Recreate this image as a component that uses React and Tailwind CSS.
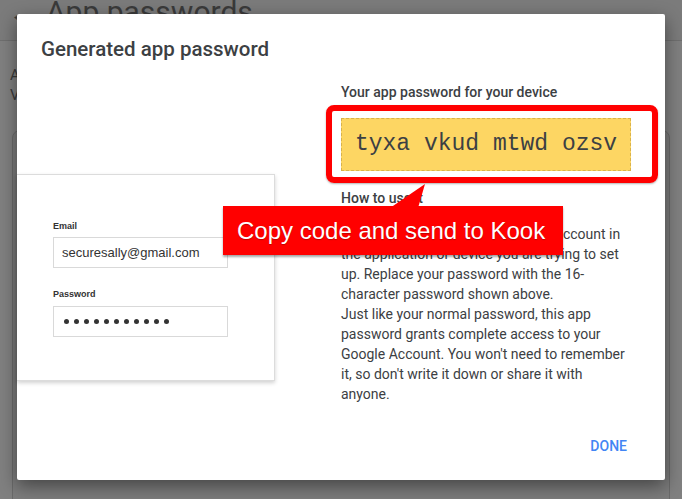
import React from "react"

const dots = Array.from({ length: 11 })

export default function App() {
  return (
    <div className="relative w-[682px] h-[499px] overflow-hidden bg-[#808080] font-['Roboto',sans-serif]">
      {/* page behind the modal */}
      <div className="h-[41px] bg-[#7b7b7b] border-b border-[#6f6f6f] flex items-start pl-[10px] gap-[14px] overflow-hidden">
        <span className="text-[22px] leading-[24px] text-[#3a3a3a] mt-[2px]">←</span>
        <span className="text-[30px] leading-[30px] text-[#3a3a3a] -mt-[3px]">App passwords</span>
      </div>
      <div className="pl-[10px] pt-[24px] text-[15px] leading-[20px] text-[#3a3a3a]">
        <p>App passwords let you sign in</p>
        <p>Verify it's you</p>
      </div>
      <div className="mx-[12px] mt-[25px] h-[400px] rounded-[8px] border border-[#6a6a6a] bg-[#7c7c7c]"></div>

      {/* dialog */}
      <div className="absolute left-[17px] top-[14px] w-[648px] h-[466px] bg-white rounded-[2px] shadow-[0_6px_18px_rgba(0,0,0,0.45)]">
        <h1 className="pl-[24px] pt-[21px] text-[20.5px] leading-[28px] font-medium text-[#3c4043]">Generated app password</h1>

        <div className="flex">
          <div className="w-[324px]">
            <div className="mt-[111px] w-[258px] h-[207px] bg-white border border-l-0 border-[#dcdcdc] shadow-[0_2px_4px_rgba(0,0,0,0.18)] pl-[36px] pt-[45px]">
              <p className="text-[9px] leading-[12px] font-bold text-[#333] font-['Liberation_Sans',sans-serif]">Email</p>
              <div className="mt-[5px] w-[175px] h-[31px] border border-[#d9d9d9] flex items-center pl-[8px] text-[13px] text-[#333] font-['Liberation_Sans',sans-serif]">securesally@gmail.com</div>
              <p className="mt-[20px] text-[9px] leading-[12px] font-bold text-[#333] font-['Liberation_Sans',sans-serif]">Password</p>
              <div className="mt-[6px] w-[175px] h-[31px] border border-[#d9d9d9] flex items-center gap-[5px] pl-[10px]">
                {dots.map((_, i) => (
                  <span key={i} className="w-[5px] h-[5px] rounded-full bg-[#333]"></span>
                ))}
              </div>
            </div>
          </div>

          <div className="mt-[19px] w-[300px] text-[#3c4043]">
            <p className="text-[14px] leading-[20px] font-medium">Your app password for your device</p>
            <div className="relative mt-[16px]">
              <div className="absolute -left-[15px] -top-[13px] -right-[17px] -bottom-[12px] rounded-[8px] border-[6px] border-[#ff0000] shadow-[0_1px_2px_rgba(0,0,0,0.3)]"></div>
              <div className="relative w-[290px] h-[53px] bg-[#fdd663] border border-dashed border-[#d9b24c] flex items-center justify-center font-['Liberation_Mono',monospace] text-[23px] text-[#3c4043]">
                tyxa vkud mtwd ozsv
              </div>
            </div>
            <p className="mt-[17px] text-[14px] leading-[20px] font-medium">How to use it</p>
            <p className="mt-[16px] text-[14px] leading-[20px] whitespace-nowrap">
              Go to the settings for your Google Account in<br />
              the application or device you are trying to set<br />
              up. Replace your password with the 16-<br />
              character password shown above.<br />
              Just like your normal password, this app<br />
              password grants complete access to your<br />
              Google Account. You won't need to remember<br />
              it, so don't write it down or share it with<br />
              anyone.
            </p>
          </div>
        </div>

        <div className="flex justify-end pr-[38px] mt-[32px]">
          <button className="text-[14px] leading-[20px] font-medium text-[#4285f4]">DONE</button>
        </div>

        {/* annotation callout */}
        <svg className="absolute left-[370px] top-[168px]" width="40" height="28" viewBox="0 0 40 28">
          <polygon points="3,26 31,26 38,2" fill="#ff0000" />
        </svg>
        <div className="absolute left-[206px] top-[192px] w-[340px] h-[49px] bg-[#ff0000] shadow-[0_2px_2px_rgba(0,0,0,0.35)] flex items-center pl-[14px]">
          <span className="text-white text-[24px] font-['Liberation_Sans',sans-serif] [text-shadow:0_1px_1px_rgba(0,0,0,0.25)]">Copy code and send to Kook</span>
        </div>
      </div>
    </div>
  )
}
